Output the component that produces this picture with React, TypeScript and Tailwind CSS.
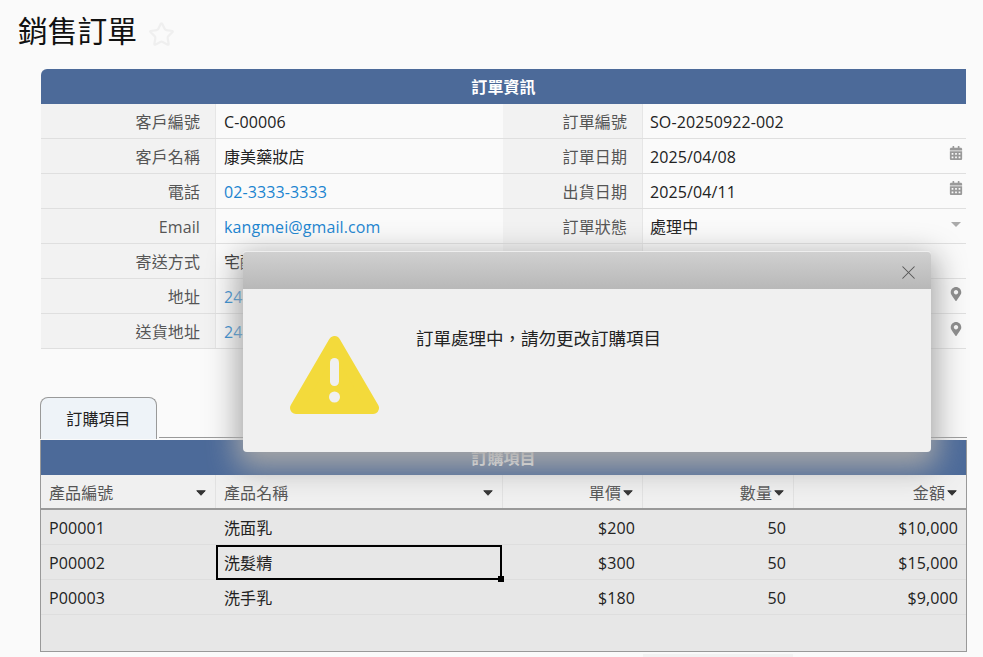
import { ReactNode } from 'react'
import { Star, X } from 'lucide-react'
import { FaCalendarAlt, FaMapMarkerAlt } from 'react-icons/fa'

const font = "font-['Open_Sans','Noto_Sans_CJK_TC',sans-serif]"

const Label = ({ children, className = '' }: { children?: ReactNode; className?: string }) => (
  <div className={`flex items-center justify-end border-r border-[#e6e6e6] bg-[#f2f2f2] pt-[2px] text-[#555] ${className}`}>
    {children}
  </div>
)

const Value = ({
  children,
  link,
  icon,
  className = '',
}: {
  children?: ReactNode
  link?: boolean
  icon?: ReactNode
  className?: string
}) => (
  <div className={`flex items-center justify-between pr-[3px] pt-[2px] ${link ? 'text-[#1b84d0]' : 'text-[#222]'} ${className}`}>
    <span className="whitespace-nowrap">{children}</span>
    {icon}
  </div>
)

const FormRow = ({
  label,
  value,
  link,
  label2,
  value2,
  icon,
}: {
  label: string
  value: string
  link?: boolean
  label2?: string
  value2?: string
  icon?: ReactNode
}) => (
  <div className="flex h-[35px] border-b border-[#dfdfdf]">
    <Label className="w-[175px] pr-[15px]">{label}</Label>
    <Value link={link} className="w-[287px] pl-2">
      {value}
    </Value>
    <Label className="w-[140px] pr-[15px]">{label2}</Label>
    <Value className="flex-1 pl-[7px]" icon={icon}>
      {value2}
    </Value>
  </div>
)

const SortCaret = ({ className = '' }: { className?: string }) => (
  <svg className={`h-[6px] w-[10px] shrink-0 ${className}`} viewBox="0 0 10 6">
    <path d="M.75.75h8.5L5 5.25Z" fill="currentColor" stroke="currentColor" strokeLinejoin="round" />
  </svg>
)

const calendar = <FaCalendarAlt className="mb-[8px] size-[14px] text-[#999]" />
const caret = (
  <span className="mb-[5px] flex w-[14px] justify-center">
    <svg className="h-[5px] w-[10px]" viewBox="0 0 10 5">
      <path d="M0 0h10L5 5Z" fill="#aaa" />
    </svg>
  </span>
)
const pin = <FaMapMarkerAlt className="mb-[6px] size-[14px] text-[#888]" />

const columns = [
  { name: '產品編號', width: 'w-[175px]' },
  { name: '產品名稱', width: 'w-[287px]' },
  { name: '單價', width: 'w-[140px]', right: true },
  { name: '數量', width: 'w-[151px]', right: true },
  { name: '金額', width: 'flex-1', right: true },
]

const rows = [
  ['P00001', '洗面乳', '$200', '50', '$10,000'],
  ['P00002', '洗髮精', '$300', '50', '$15,000'],
  ['P00003', '洗手乳', '$180', '50', '$9,000'],
]

export default function App() {
  return (
    <div className={`${font} relative h-[657px] w-[983px] overflow-hidden bg-[#fafafa] text-[16px] tracking-[0.1px]`}>
      <div className="flex h-[69px] items-start pl-[18px] pt-[8px]">
        <h1 className="text-[29.75px] leading-[46px] tracking-normal text-[#111]">銷售訂單</h1>
        <Star className="ml-[11px] mt-[13px] size-[27px] text-[#efefef]" strokeWidth={2} />
      </div>

      <section className="ml-[41px] w-[925px]">
        <div className="flex h-[35px] items-center justify-center rounded-tl-[6px] bg-[#4c6a99] font-bold text-white">訂單資訊</div>
        <FormRow label="客戶編號" value="C-00006" label2="訂單編號" value2="SO-20250922-002" />
        <FormRow label="客戶名稱" value="康美藥妝店" label2="訂單日期" value2="2025/04/08" icon={calendar} />
        <FormRow label="電話" value="02-3333-3333" link label2="出貨日期" value2="2025/04/11" icon={calendar} />
        <FormRow label="Email" value="kangmei@gmail.com" link label2="訂單狀態" value2="處理中" icon={caret} />
        <FormRow label="寄送方式" value="宅配" />
        <FormRow label="地址" value="241新北市三重區重新路" link icon={pin} />
        <FormRow label="送貨地址" value="241新北市三重區重新路" link icon={pin} />
      </section>

      <div className="ml-[40px] mt-[48px] flex h-[42px] w-[927px] items-end">
        <div className="flex h-[42px] w-[117px] items-center justify-center rounded-t-[8px] border border-b-0 border-[#999] bg-[#eef3f8] text-[#222]">
          訂購項目
        </div>
        <div className="mb-[1px] ml-[2px] flex-1 border-b border-[#999]" />
      </div>

      <section className="ml-[40px] mt-[1px] flex h-[212px] w-[927px] flex-col border-b border-l border-r border-[#999] bg-[#e7e7e7]">
        <div className="flex h-[35px] shrink-0 items-center justify-center bg-[#4c6a99] font-bold text-white">訂購項目</div>
        <div className="flex h-[35px] shrink-0 border-b-2 border-[#999] bg-[#f0f0f0] text-[#555]">
          {columns.map((col) => (
            <div
              key={col.name}
              className={`flex items-center border-r border-[#e2e2e2] pt-[2px] last:border-r-0 ${col.width} ${
                col.right ? 'justify-end pr-[9px]' : 'justify-between pl-2 pr-[9px]'
              }`}
            >
              {col.name}
              <SortCaret className="ml-[2px] mt-[1px] text-[#333]" />
            </div>
          ))}
        </div>
        {rows.map((row) => (
          <div key={row[0]} className="flex h-[35px] shrink-0 border-b border-[#dedede] text-[#222]">
            {row.map((cell, i) => (
              <div
                key={i}
                className={`relative flex items-center px-2 pt-[2px] ${columns[i].width} ${columns[i].right ? 'justify-end' : ''}`}
              >
                {cell}
                {cell === '洗髮精' && (
                  <div className="absolute bottom-[-1px] left-0 right-[1px] top-0 border-2 border-black">
                    <div className="absolute bottom-[-4px] right-[-4px] size-[6px] bg-black" />
                  </div>
                )}
              </div>
            ))}
          </div>
        ))}
      </section>

      <div className="ml-[643px] mt-[2px] h-[4px] w-[150px] bg-[#f2f2f2]" />

      <div className="absolute left-[243px] top-[251px] h-[201px] w-[688px] rounded-[4px] bg-[#f0f0f0] shadow-[0_10px_30px_6px_#a7a7a7]">
        <div className="flex h-[38px] items-center justify-end rounded-t-[4px] border-t border-[#eeeeee] bg-gradient-to-b from-[#d0d0d0] to-[#b8b8b8] pr-[11px]">
          <X className="mt-[4px] size-[23px] text-[#555]" strokeWidth={1.1} />
        </div>
        <div className="flex">
          <svg className="ml-[47px] mt-[47px] h-[78px] w-[89px] shrink-0" viewBox="0 0 89 78">
            <path d="M44.5 6 83 72H6Z" fill="#f3da3b" stroke="#f3da3b" strokeWidth="12" strokeLinejoin="round" />
            <rect x="40" y="22" width="9" height="28" rx="4.5" fill="#f0f0f0" />
            <circle cx="44.5" cy="61" r="5.5" fill="#f0f0f0" />
          </svg>
          <p className="ml-[37px] mt-[37px] text-[17.5px] leading-[24px] tracking-normal text-[#222]">{'訂單處理中\uFF0C請勿更改訂購項目'}</p>
        </div>
      </div>
    </div>
  )
}
